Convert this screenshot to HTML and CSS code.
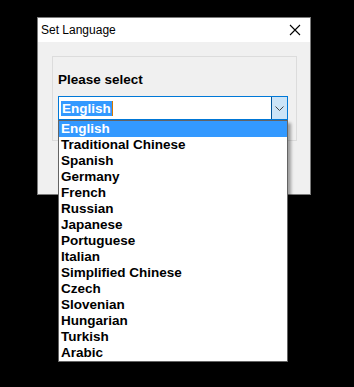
FILE: index.html
```html
<!DOCTYPE html>
<html lang="en">
<head>
    <meta charset="UTF-8">
    <title>Set Language</title>
    <link rel="stylesheet" href="styles.css">
</head>
<body>
    <div class="dialog">
        <div class="titlebar">
            <span class="title">Set Language</span>
            <svg class="close" width="12" height="12" viewBox="0 0 12 12">
                <path d="M1 1 L11 11 M11 1 L1 11" stroke="#000" stroke-width="1.1" fill="none"/>
            </svg>
        </div>
        <div class="content">
            <div class="group">
                <div class="label">Please select</div>
                <div class="combo">
                    <div class="combo-field">
                        <span class="selected-text">English</span><span class="caret"></span>
                    </div>
                    <div class="combo-btn">
                        <svg width="9" height="5" viewBox="0 0 9 5">
                            <path d="M0.5 0.5 L4.5 4.5 L8.5 0.5" stroke="#444" stroke-width="1" fill="none"/>
                        </svg>
                    </div>
                    <ul class="droplist">
                        <li class="active">English</li>
                        <li>Traditional Chinese</li>
                        <li>Spanish</li>
                        <li>Germany</li>
                        <li>French</li>
                        <li>Russian</li>
                        <li>Japanese</li>
                        <li>Portuguese</li>
                        <li>Italian</li>
                        <li>Simplified Chinese</li>
                        <li>Czech</li>
                        <li>Slovenian</li>
                        <li>Hungarian</li>
                        <li>Turkish</li>
                        <li>Arabic</li>
                    </ul>
                </div>
            </div>
        </div>
    </div>
</body>
</html>
```

FILE: styles.css
```css
html {
    height: 100%;
    background: #000;
}

body {
    margin: 0;
    min-height: 100%;
    box-sizing: border-box;
    background: #000;
    padding: 17px 0 0 37px;
    font-family: "Liberation Sans", Arial, sans-serif;
}

.dialog {
    position: relative;
    width: 272px;
    height: 176px;
    border: 1px solid #7a7a7a;
    background: #f0f0f0;
    display: flex;
    flex-direction: column;
}

.titlebar {
    height: 24px;
    background: #fff;
    display: flex;
    align-items: center;
    justify-content: space-between;
    padding: 0 9px 0 3px;
}

.title {
    font-size: 12px;
    color: #000;
}

.close {
    display: block;
}

.content {
    flex: 1;
    padding: 14px 13px 0 14px;
}

.group {
    height: 83px;
    border: 1px solid #dcdcdc;
    padding: 0 0 0 5px;
}

.label {
    margin-top: 15px;
    font-size: 13.5px;
    font-weight: bold;
    color: #000;
    line-height: 16px;
}

.combo {
    position: relative;
    margin-top: 8px;
    width: 230px;
    height: 24px;
    display: flex;
    box-sizing: border-box;
    border: 1px solid #0078d7;
    background: #fff;
}

.combo-field {
    flex: 1;
    display: flex;
    align-items: center;
    padding-left: 2px;
}

.selected-text {
    background: #3399ff;
    color: #fff;
    font-size: 13.5px;
    font-weight: bold;
    line-height: 15px;
    padding: 0 1px;
}

.caret {
    width: 1px;
    height: 15px;
    background: #d77800;
}

.combo-btn {
    width: 15px;
    border-left: 1px solid #005499;
    background: #cce4f7;
    display: flex;
    align-items: center;
    justify-content: center;
}

.droplist {
    position: absolute;
    z-index: 10;
    left: -1px;
    top: 23px;
    width: 228px;
    margin: 0;
    padding: 0;
    list-style: none;
    background: #fff;
    border: 1px solid #646464;
    box-shadow: 3px 3px 3px rgba(0, 0, 0, 0.35);
}

.droplist li {
    height: 16px;
    line-height: 16px;
    padding-left: 2px;
    font-size: 13.5px;
    font-weight: bold;
    color: #000;
}

.droplist li.active {
    background: #3399ff;
    color: #fff;
}
```
